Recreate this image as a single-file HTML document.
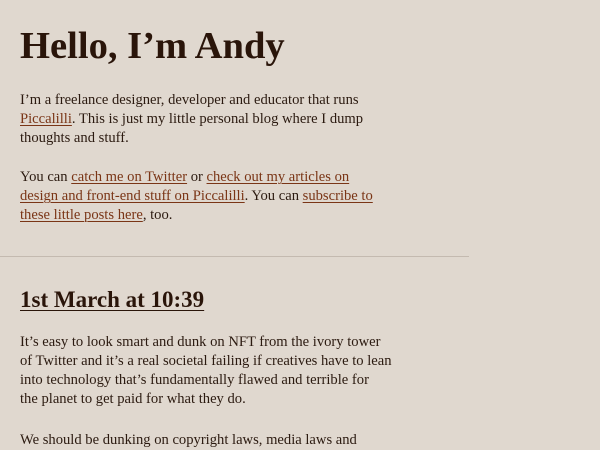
<!DOCTYPE html>
<html><head><meta charset="utf-8"><style>
html,body{margin:0;padding:0;background:#e0d8cf;}
body{width:600px;height:450px;overflow:hidden;position:relative;font-family:"Liberation Serif",serif;color:#2b1a10;}
.a{position:absolute;left:20px;white-space:nowrap;}
h1{margin:0;font-size:38.6px;font-weight:bold;color:#2a150a;letter-spacing:0px;}
p{margin:0;font-size:14.6px;line-height:19px;}
a{color:#7a3516;text-decoration:underline;text-underline-offset:2px;text-decoration-thickness:1px;}
h2{margin:0;font-size:23px;font-weight:bold;color:#2a150a;text-decoration:underline;text-decoration-thickness:1px;text-underline-offset:3px;}
hr{position:absolute;left:0;top:256px;width:469px;margin:0;border:0;border-top:1px solid #c4bab0;}
</style></head><body>
<div class="a" style="top:24px"><h1>Hello, I’m Andy</h1></div>
<div class="a" style="top:91px"><p>I’m a freelance designer, developer and educator that runs<br><a>Piccalilli</a>. This is just my little personal blog where I dump<br>thoughts and stuff.</p></div>
<div class="a" style="top:168px"><p>You can <a>catch me on Twitter</a> or <a>check out my articles on</a><br><a>design and front-end stuff on Piccalilli</a>. You can <a>subscribe to</a><br><a>these little posts here</a>, too.</p></div>
<hr>
<div class="a" style="top:287px"><h2>1st March at 10:39</h2></div>
<div class="a" style="top:333px"><p>It’s easy to look smart and dunk on NFT from the ivory tower<br>of Twitter and it’s a real societal failing if creatives have to lean<br>into technology that’s fundamentally flawed and terrible for<br>the planet to get paid for what they do.</p></div>
<div class="a" style="top:431px"><p>We should be dunking on copyright laws, media laws and</p></div>
</body></html>
